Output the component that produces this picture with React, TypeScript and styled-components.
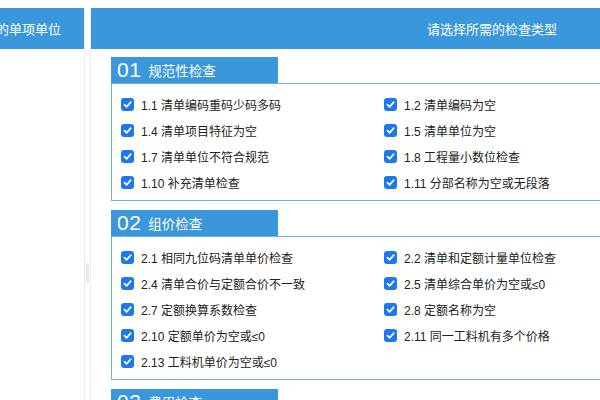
import React from 'react';
import styled, { createGlobalStyle } from 'styled-components';

const GlobalStyle = createGlobalStyle`
  html, body {
    margin: 0;
    padding: 0;
    background: #fff;
    overflow: hidden;
  }
  body {
    font-family: "Liberation Sans", "Noto Sans CJK SC", sans-serif;
    color: #222;
  }
`;

interface ISection {
  no: string;
  title: string;
  items: string[];
}

const sections: ISection[] = [
  {
    no: '01',
    title: '规范性检查',
    items: [
      '1.1 清单编码重码少码多码',
      '1.2 清单编码为空',
      '1.4 清单项目特征为空',
      '1.5 清单单位为空',
      '1.7 清单单位不符合规范',
      '1.8 工程量小数位检查',
      '1.10 补充清单检查',
      '1.11 分部名称为空或无段落',
    ],
  },
  {
    no: '02',
    title: '组价检查',
    items: [
      '2.1 相同九位码清单单价检查',
      '2.2 清单和定额计量单位检查',
      '2.4 清单合价与定额合价不一致',
      '2.5 清单综合单价为空或≤0',
      '2.7 定额换算系数检查',
      '2.8 定额名称为空',
      '2.10 定额单价为空或≤0',
      '2.11 同一工料机有多个价格',
      '2.13 工料机单价为空或≤0',
    ],
  },
  {
    no: '03',
    title: '费用检查',
    items: ['3.1 费用汇总检查', '3.2 取费文件检查'],
  },
];

const CheckBox = () => (
  <Box>
    <svg width="9" height="9" viewBox="0 0 10 10">
      <path d="M1.6 5.2 L4 7.6 L8.6 2.4" fill="none" stroke="#fff" strokeWidth="1.9" strokeLinecap="round" strokeLinejoin="round" />
    </svg>
  </Box>
);

const App = () => {
  return (
    <>
      <GlobalStyle />
      <Page>
        <LeftPanel>
          <PanelHeader $align="right">
            <span>请选择所需的单项单位</span>
          </PanelHeader>
        </LeftPanel>
        <Splitter>
          <Handle />
        </Splitter>
        <RightPanel>
          <PanelHeader $align="center">
            <span>请选择所需的检查类型</span>
          </PanelHeader>
          <Content>
            {sections.map((section) => (
              <Section key={section.no}>
                <TabRow>
                  <Tab>
                    <TabNo>{section.no}</TabNo>
                    <TabTitle>{section.title}</TabTitle>
                  </Tab>
                </TabRow>
                <SectionBody>
                  {section.items.map((item) => (
                    <Item key={item}>
                      <CheckBox />
                      <ItemText>{item}</ItemText>
                    </Item>
                  ))}
                </SectionBody>
              </Section>
            ))}
          </Content>
        </RightPanel>
      </Page>
    </>
  );
};

const Page = styled.div`
  display: flex;
  align-items: stretch;
  padding-top: 8px;
  height: 600px;
  width: 900px;
`;

const LeftPanel = styled.div`
  width: 84px;
  flex-shrink: 0;
  border-right: 1px solid #e9ecef;
`;

const PanelHeader = styled.div<{ $align: 'right' | 'center' }>`
  height: 41px;
  background: #3b97db;
  color: #fff;
  font-size: 13px;
  display: flex;
  align-items: center;
  justify-content: ${(p) => (p.$align === 'right' ? 'flex-end' : 'center')};
  padding-right: ${(p) => (p.$align === 'right' ? '23px' : '0')};
  overflow: hidden;
  white-space: nowrap;

  span {
    flex-shrink: 0;
  }
`;

const Splitter = styled.div`
  width: 5px;
  flex-shrink: 0;
  position: relative;
`;

const Handle = styled.div`
  position: absolute;
  left: 1px;
  top: 255px;
  width: 3px;
  height: 20px;
  border-radius: 2px;
  background: #e6e9ec;
`;

const RightPanel = styled.div`
  width: 802px;
  flex-shrink: 0;
  border-left: 1px solid #e9ecef;
`;

const Content = styled.div`
  padding: 8px 20px 0 20px;
  display: flex;
  flex-direction: column;
  gap: 9px;
`;

const Section = styled.div``;

const TabRow = styled.div`
  display: flex;
`;

const Tab = styled.div`
  width: 167px;
  height: 26px;
  background: #3b97db;
  color: #fff;
  display: flex;
  align-items: center;
  padding-left: 6px;
  box-sizing: border-box;
`;

const TabNo = styled.span`
  font-size: 21px;
  font-weight: 300;
  margin-right: 7px;
  letter-spacing: 0.5px;
`;

const TabTitle = styled.span`
  font-size: 13.5px;
`;

const SectionBody = styled.div`
  border: 1px solid #6eb0e0;
  display: grid;
  grid-template-columns: 263px 263px;
  grid-auto-rows: 26px;
  padding: 7px 0 5px 9px;
`;

const Item = styled.label`
  display: flex;
  align-items: center;
`;

const Box = styled.span`
  width: 13px;
  height: 13px;
  border-radius: 3px;
  background: #1c78ec;
  display: flex;
  align-items: center;
  justify-content: center;
  margin-right: 7px;
  flex-shrink: 0;
`;

const ItemText = styled.span`
  font-size: 12px;
  color: #222;
  white-space: nowrap;
`;

export default App;
